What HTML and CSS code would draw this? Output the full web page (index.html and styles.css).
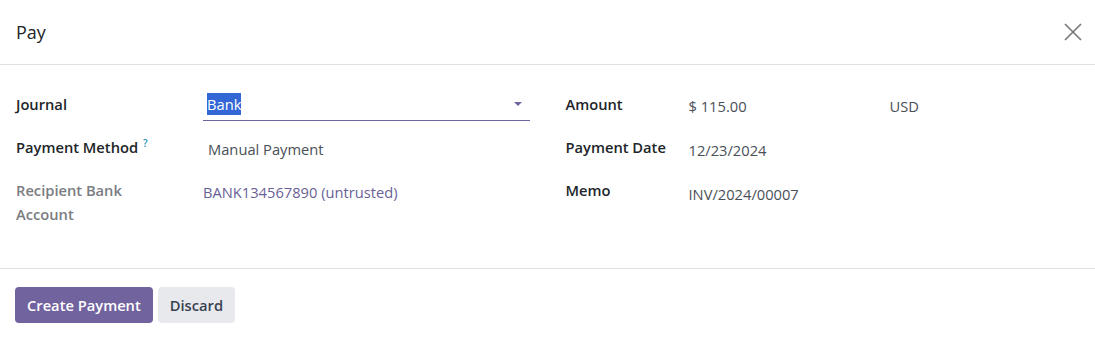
FILE: index.html
```html
<!DOCTYPE html>
<html lang="en">
<head>
	<meta charset="UTF-8">
	<title>Pay</title>
	<link rel="stylesheet" href="styles.css">
</head>
<body>
	<div class="modal">
		<div class="modal-header">
			<h4 class="modal-title">Pay</h4>
			<button class="btn-close" aria-label="Close">
				<svg width="18" height="18" viewBox="0 0 18 18"><path d="M1 1L17 17M17 1L1 17" stroke="#757575" stroke-width="1.6" fill="none"/></svg>
			</button>
		</div>

		<div class="modal-body">
			<div class="group">
				<div class="field">
					<label class="label">Journal</label>
					<div class="input select">
						<span class="sel">Bank</span>
						<span class="caret"></span>
					</div>
				</div>
				<div class="field">
					<label class="label">Payment Method <sup class="help">?</sup></label>
					<div class="value pad">Manual Payment</div>
				</div>
				<div class="field">
					<label class="label muted">Recipient Bank<br>Account</label>
					<div class="value link">BANK134567890 (untrusted)</div>
				</div>
			</div>

			<div class="group right">
				<div class="field">
					<label class="label">Amount</label>
					<div class="value amount">
						<span class="amount-val">$ 115.00</span>
						<span class="currency">USD</span>
					</div>
				</div>
				<div class="field">
					<label class="label">Payment Date</label>
					<div class="value lower">12/23/2024</div>
				</div>
				<div class="field">
					<label class="label">Memo</label>
					<div class="value lowest">INV/2024/00007</div>
				</div>
			</div>
		</div>

		<div class="modal-footer">
			<button class="btn btn-primary">Create Payment</button>
			<button class="btn btn-secondary">Discard</button>
		</div>
	</div>
</body>
</html>
```

FILE: styles.css
```css
* {
	padding: 0;
	margin: 0;
	box-sizing: border-box;
}
body {
	font-family: "Open Sans", "Noto Sans", sans-serif;
	font-size: 14.7px;
	color: #212529;
	background: #fff;
}
.modal {
	width: 1095px;
}
.modal-header {
	height: 65px;
	border-bottom: 1px solid #dee2e6;
	display: flex;
	align-items: center;
	justify-content: space-between;
	padding: 0 13px 0 16px;
}
.modal-title {
	font-size: 18px;
	font-weight: 500;
	color: #212529;
}
.btn-close {
	border: 0;
	background: none;
	width: 18px;
	height: 18px;
	display: flex;
}
.modal-body {
	display: grid;
	grid-template-columns: 1fr 1fr;
	column-gap: 36px;
	padding: 23px 16px 42px;
	border-bottom: 1px solid #dee2e6;
}
.group {
	display: flex;
	flex-direction: column;
	gap: 10px;
}
.field {
	display: grid;
	grid-template-columns: 187px 1fr;
	min-height: 33px;
}
.right .field {
	grid-template-columns: 123px 1fr;
}
.label {
	font-weight: 600;
	line-height: 24px;
	margin-top: 4px;
	color: #212529;
}
.label.muted {
	color: #7a7d81;
}
.help {
	color: #1f8fbf;
	font-size: 10px;
	vertical-align: top;
	position: relative;
	top: -4px;
	margin-left: 1px;
}
.input {
	line-height: 24px;
	padding: 4px 4px;
	border-bottom: 1px solid #71639e;
	display: flex;
	justify-content: space-between;
	align-items: center;
	height: 33px;
}
.sel {
	background: #3367d6;
	color: #fff;
	line-height: 22px;
}
.caret {
	width: 0;
	height: 0;
	border-left: 4px solid transparent;
	border-right: 4px solid transparent;
	border-top: 4px solid #71639e;
	margin-right: 4px;
}
.value {
	line-height: 24px;
	margin-top: 6px;
	color: #495057;
}
.value.lower {
	margin-top: 7px;
}
.value.lowest {
	margin-top: 8px;
}
.value.pad {
	padding-left: 5px;
}
.value.link {
	color: #6a5f96;
}
.amount {
	display: flex;
}
.amount-val {
	width: 201px;
}
.modal-footer {
	display: flex;
	gap: 5px;
	padding: 18px 15px;
}
.btn {
	font-family: inherit;
	font-size: 14.7px;
	font-weight: 600;
	border: 0;
	border-radius: 4px;
	height: 36px;
	padding: 0 12px;
}
.btn-primary {
	background: #71639e;
	color: #fff;
}
.btn-secondary {
	background: #e7e9ed;
	color: #374151;
}
```
